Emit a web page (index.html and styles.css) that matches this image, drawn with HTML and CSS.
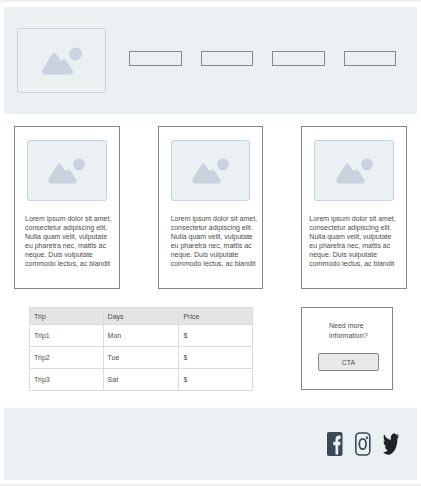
FILE: index.html
```html
<!DOCTYPE html>
<html lang="en">
<head>
<meta charset="utf-8">
<meta name="viewport" content="width=device-width, initial-scale=1">
<title>Trips</title>
<link rel="stylesheet" href="styles.css">
</head>
<body>
<svg class="sprite" aria-hidden="true">
  <symbol id="picture" viewBox="0 0 40 28">
    <path d="M4 27.500Q-1.500 27 1 22L9.200 8.200Q12.200 4 15.200 8.200L18.800 14Q22 10.500 24.800 14.200L30.800 24Q32 27 29 27.500Z"/>
    <circle cx="33.500" cy="7" r="6.400"/>
  </symbol>
</svg>
<header class="header">
  <a class="logo" href="#" aria-label="Home"><svg class="picture"><use href="#picture"/></svg></a>
  <nav class="nav" aria-label="Main">
    <a href="#" aria-label="Link 1"></a>
    <a href="#" aria-label="Link 2"></a>
    <a href="#" aria-label="Link 3"></a>
    <a href="#" aria-label="Link 4"></a>
  </nav>
</header>
<main>
  <section class="cards">
    <article class="card card-first">
      <div class="thumb"><svg class="picture"><use href="#picture"/></svg></div>
      <p>Lorem ipsum dolor sit amet,<br>consectetur adipiscing elit.<br>Nulla quam velit, vulputate<br>eu pharetra nec, mattis ac<br>neque. Duis vulputate<br>commodo lectus, ac blandit</p>
    </article>
    <article class="card">
      <div class="thumb"><svg class="picture"><use href="#picture"/></svg></div>
      <p>Lorem ipsum dolor sit amet,<br>consectetur adipiscing elit.<br>Nulla quam velit, vulputate<br>eu pharetra nec, mattis ac<br>neque. Duis vulputate<br>commodo lectus, ac blandit</p>
    </article>
    <article class="card card-last">
      <div class="thumb"><svg class="picture"><use href="#picture"/></svg></div>
      <p>Lorem ipsum dolor sit amet,<br>consectetur adipiscing elit.<br>Nulla quam velit, vulputate<br>eu pharetra nec, mattis ac<br>neque. Duis vulputate<br>commodo lectus, ac blandit</p>
    </article>
  </section>
  <section class="details">
    <table class="trips">
      <colgroup><col class="col-trip"><col class="col-days"><col></colgroup>
      <thead><tr><th>Trip</th><th>Days</th><th>Price</th></tr></thead>
      <tbody>
        <tr><td>Trip1</td><td>Mon</td><td>$</td></tr>
        <tr><td>Trip2</td><td>Tue</td><td>$</td></tr>
        <tr><td>Trip3</td><td>Sat</td><td>$</td></tr>
      </tbody>
    </table>
    <aside class="info">
      <p>Need more<br>information?</p>
      <button type="button">CTA</button>
    </aside>
  </section>
</main>
<footer class="footer">
  <a href="#" aria-label="Facebook"><svg viewBox="0 0 16 24"><rect width="15.500" height="24" rx="2" fill="#3b4858"/><path d="M8.500 22.500V13.200H6.300V9.800H8.500V7.500Q8.500 3.500 12 3.500H13.500V7H12.600Q11.200 7 11.200 8.500V9.800H13.500L13.200 13.200H11.200V22.500Z" fill="#edf1f4"/></svg></a>
  <a href="#" aria-label="Instagram"><svg viewBox="0 0 16 24" fill="none" stroke="#3b4858"><rect x=".8" y="1" width="14" height="22" rx="4" stroke-width="1.600"/><ellipse cx="7.700" cy="12" rx="3.400" ry="5.200" stroke-width="1.800"/><ellipse cx="11.900" cy="5.700" rx="1" ry="1.500" fill="#3b4858" stroke="none"/></svg></a>
  <a href="#" aria-label="Twitter"><svg viewBox="0 1 24 22" preserveAspectRatio="none"><path fill="#202326" d="M23.950 4.570a10 10 0 0 1-2.820.770 4.960 4.960 0 0 0 2.160-2.720c-.950.550-2 .950-3.130 1.180a4.920 4.920 0 0 0-8.380 4.480C7.690 8.090 4.070 6.130 1.640 3.160a4.820 4.820 0 0 0-.670 2.480c0 1.710.870 3.210 2.190 4.100a4.900 4.900 0 0 1-2.230-.620v.060a4.920 4.920 0 0 0 3.950 4.830 5 5 0 0 1-2.210.080 4.940 4.940 0 0 0 4.600 3.420A9.870 9.870 0 0 1 0 19.540a14 14 0 0 0 7.550 2.210c9.050 0 14-7.500 14-13.980 0-.210 0-.420-.020-.630a9.940 9.940 0 0 0 2.420-2.570z"/></svg></a>
</footer>
</body>
</html>
```
FILE: styles.css
```css
* { box-sizing: border-box; }

body {
  margin: 0;
  padding: 5px 4px 4px;
  border-top: 2px solid #eef1f4;
  border-bottom: 2px solid #eef1f4;
  background: #fff;
  color: #4c4c4c;
  font-family: "Liberation Sans", Arial, sans-serif;
  font-size: 7px;
  line-height: 9px;
}

p { margin: 0; }

.sprite { position: absolute; width: 0; height: 0; }

.header {
  display: flex;
  align-items: flex-start;
  gap: 23px;
  padding: 21px 21px 21px 13px;
  background: #ebf0f3;
  border-radius: 1px;
}

.logo, .thumb {
  display: flex;
  align-items: center;
  justify-content: center;
  border: 1px solid #c8d1de;
  border-radius: 3px;
}

.logo { width: 89px; height: 65px; }

.picture { width: 40px; height: 28px; fill: #c9d2de; }

.nav {
  flex: 1;
  display: grid;
  grid-template-columns: repeat(4, 1fr);
  gap: 19px;
  padding-top: 23px;
}

.nav a { height: 15px; border: 1px solid #85888c; }

.cards {
  display: grid;
  grid-template-columns: repeat(3, minmax(0, 1fr));
  gap: 38px;
  padding: 12px 10px 0;
}

.card {
  padding: 13px 12px 20px;
  border: 1px solid #858585;
}

.thumb { height: 61px; background: #ebf0f3; }

.thumb .picture { width: 37px; height: 26px; }

.card p { margin-top: 13px; white-space: nowrap; }

.card-first p { margin-left: -2px; }
.card-last p { margin-left: -5px; }

.details {
  display: flex;
  align-items: flex-start;
  justify-content: space-between;
  gap: 48px;
  padding: 18px 24px 17px 25px;
}

.trips {
  flex: 1;
  border-collapse: collapse;
  table-layout: fixed;
}

.col-trip { width: 33%; }
.col-days { width: 34%; }

.trips th, .trips td {
  padding: 0 4px;
  border: 1px solid #dcdcdc;
  text-align: left;
  font-weight: normal;
}

.trips th { height: 17px; background: #e4e4e4; }
.trips td { height: 22px; }

.info {
  flex: 0 0 92px;
  display: flex;
  flex-direction: column;
  gap: 12px;
  padding: 13px 13px 18px 16px;
  border: 1px solid #858585;
}

.info p { padding-left: 11px; line-height: 10px; }

.info button {
  height: 18px;
  padding: 0;
  border: 1px solid #858585;
  border-radius: 2px;
  background: #e9e9e9;
  color: inherit;
  font: inherit;
}

.footer {
  display: flex;
  justify-content: flex-end;
  gap: 12px;
  padding: 24px 18px;
  background: #ebf0f3;
}

.footer svg { display: block; width: 16px; height: 24px; }
```
